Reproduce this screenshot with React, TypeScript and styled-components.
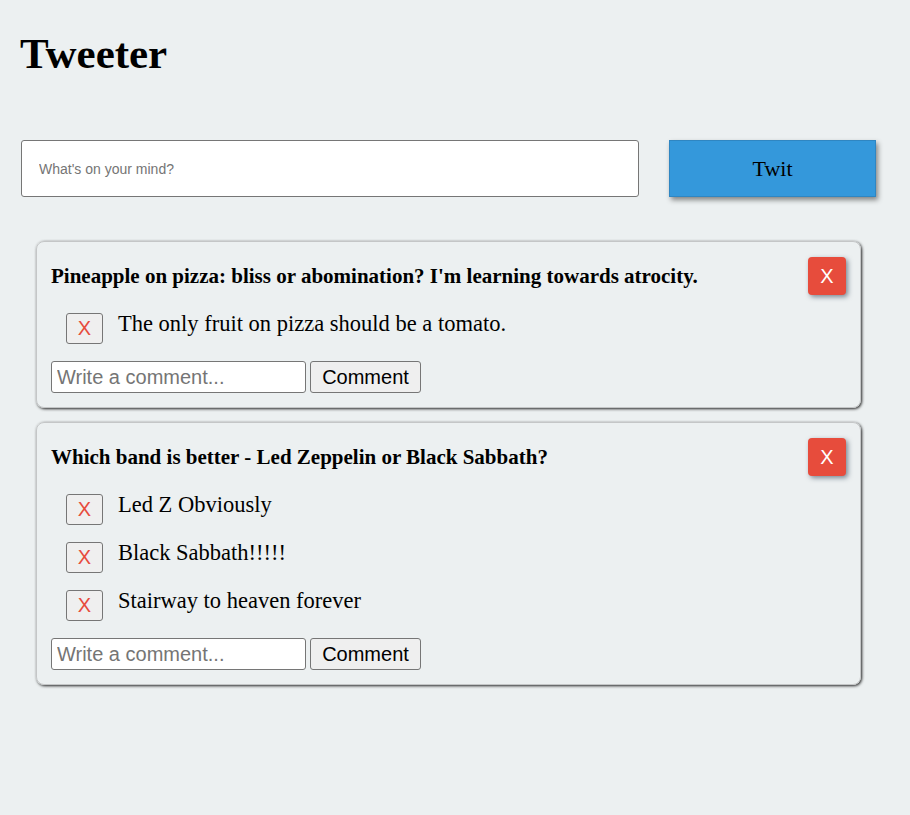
import React from "react";
import styled, { createGlobalStyle } from "styled-components";

const Global = createGlobalStyle`
  html, body { margin: 0; padding: 0; background: #ecf0f1; }
  body { font-family: "Liberation Serif", serif; color: #000; }
`;

const Page = styled.div`
  padding: 8px 20px 40px 20px;
`;

const Title = styled.h1`
  font-family: "Liberation Serif", serif;
  font-size: 43px;
  font-weight: bold;
  margin: 22px 0 0 0;
  line-height: 48px;
`;

const Composer = styled.div`
  display: flex;
  align-items: flex-start;
  gap: 30px;
  margin-top: 62px;
  padding-left: 1px;
`;

const TweetInput = styled.input`
  box-sizing: border-box;
  width: 618px;
  height: 57px;
  border: 1px solid #767676;
  border-radius: 3px;
  background: #fff;
  padding: 0 17px;
  font-family: "Liberation Sans", Arial, sans-serif;
  font-size: 14px;
  &::placeholder { color: #757575; }
`;

const TwitButton = styled.button`
  box-sizing: border-box;
  width: 207px;
  height: 57px;
  background: #3498db;
  border: 1px solid #2f86c2;
  box-shadow: 2px 3px 5px rgba(0, 0, 0, 0.45);
  font-family: "Liberation Serif", serif;
  font-size: 22px;
  color: #000;
`;

const Feed = styled.div`
  display: flex;
  flex-direction: column;
  gap: 14px;
  margin: 44px 0 0 16px;
  width: 825px;
`;

const Card = styled.div`
  box-sizing: border-box;
  border-radius: 8px;
  border: 1px solid #c4c6c7;
  box-shadow: 1px 1px 3px rgba(0, 0, 0, 0.85);
  padding: 15px 14px 14px 14px;
`;

const CardHead = styled.div`
  display: flex;
  justify-content: space-between;
  align-items: center;
`;

const PostText = styled.div`
  font-weight: bold;
  font-size: 21px;
  line-height: 24px;
`;

const DeleteButton = styled.button`
  width: 38px;
  height: 38px;
  background: #e74c3c;
  border: none;
  border-radius: 4px;
  color: #fff;
  font-family: "Liberation Sans", Arial, sans-serif;
  font-size: 20px;
  box-shadow: 2px 2px 5px rgba(30, 50, 70, 0.55);
  padding: 0;
`;

const Comments = styled.div`
  display: flex;
  flex-direction: column;
  gap: 17px;
  margin: 18px 0 17px 15px;
`;

const CommentRow = styled.div`
  display: flex;
  align-items: flex-start;
  gap: 15px;
`;

const CommentX = styled.button`
  box-sizing: border-box;
  width: 37px;
  height: 31px;
  background: #efefef;
  border: 1px solid #767676;
  border-radius: 3px;
  color: #e74c3c;
  font-family: "Liberation Sans", Arial, sans-serif;
  font-size: 20px;
  padding: 0;
  line-height: 29px;
`;

const CommentText = styled.div`
  font-size: 22.5px;
  line-height: 22px;
`;

const CommentForm = styled.div`
  display: flex;
  gap: 4px;
`;

const CommentInput = styled.input`
  box-sizing: border-box;
  width: 255px;
  height: 32px;
  border: 1px solid #767676;
  border-radius: 3px;
  background: #fff;
  padding: 0 5px;
  font-family: "Liberation Sans", Arial, sans-serif;
  font-size: 20px;
  &::placeholder { color: #757575; }
`;

const CommentButton = styled.button`
  box-sizing: border-box;
  height: 32px;
  width: 111px;
  background: #efefef;
  border: 1px solid #767676;
  border-radius: 3px;
  font-family: "Liberation Sans", Arial, sans-serif;
  font-size: 20px;
  color: #000;
  padding: 0;
`;

const posts = [
  {
    text: "Pineapple on pizza: bliss or abomination? I'm learning towards atrocity.",
    comments: ["The only fruit on pizza should be a tomato."],
  },
  {
    text: "Which band is better - Led Zeppelin or Black Sabbath?",
    comments: ["Led Z Obviously", "Black Sabbath!!!!!", "Stairway to heaven forever"],
  },
];

export default function App() {
  return (
    <>
      <Global />
      <Page>
        <Title>Tweeter</Title>
        <Composer>
          <TweetInput placeholder="What's on your mind?" />
          <TwitButton>Twit</TwitButton>
        </Composer>
        <Feed>
          {posts.map((p, i) => (
            <Card key={i}>
              <CardHead>
                <PostText>{p.text}</PostText>
                <DeleteButton>X</DeleteButton>
              </CardHead>
              <Comments>
                {p.comments.map((c, j) => (
                  <CommentRow key={j}>
                    <CommentX>X</CommentX>
                    <CommentText>{c}</CommentText>
                  </CommentRow>
                ))}
              </Comments>
              <CommentForm>
                <CommentInput placeholder="Write a comment..." />
                <CommentButton>Comment</CommentButton>
              </CommentForm>
            </Card>
          ))}
        </Feed>
      </Page>
    </>
  );
}
